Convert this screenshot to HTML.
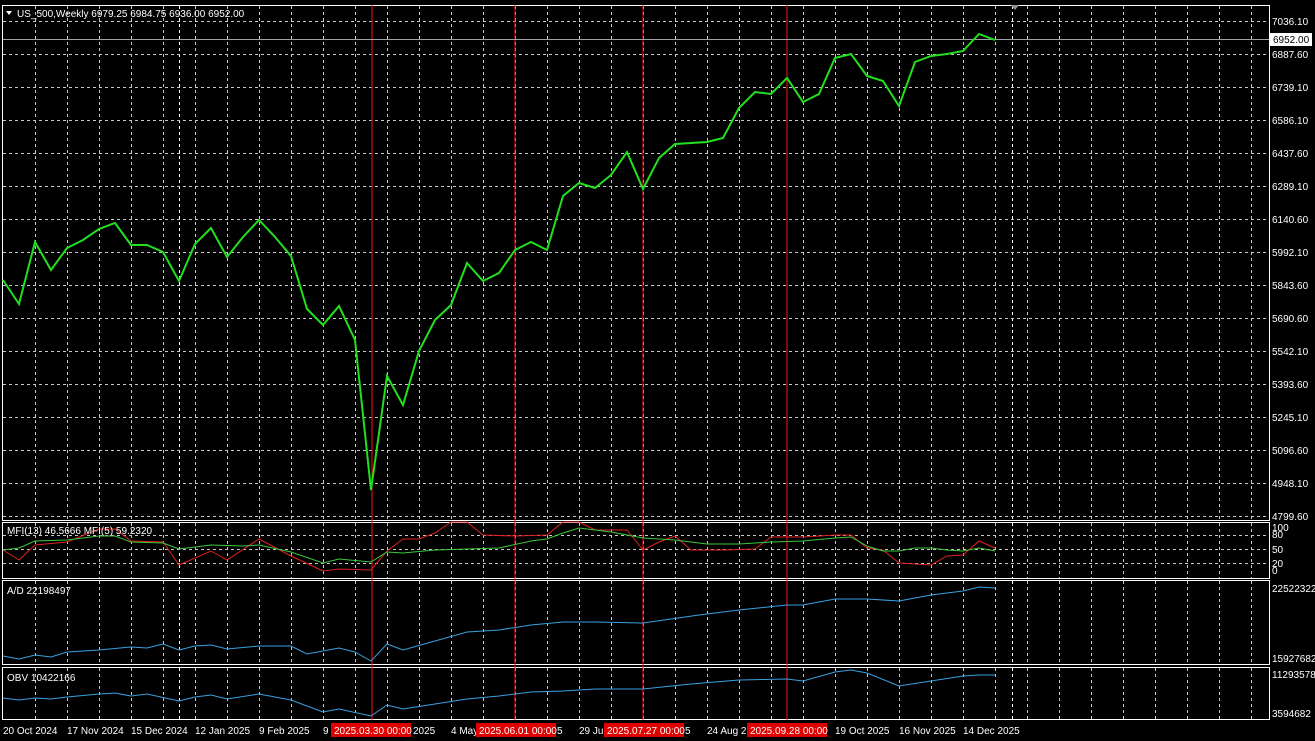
<!DOCTYPE html>
<html><head><meta charset="utf-8"><style>
html,body{margin:0;padding:0;background:#000;width:1315px;height:741px;overflow:hidden}
svg{display:block}
text{font-family:"Liberation Sans",sans-serif;font-size:10px;fill:#fff}
</style></head><body>
<svg id="s" width="1315" height="741" viewBox="0 0 1315 741" xmlns="http://www.w3.org/2000/svg">
<rect width="1315" height="741" fill="#000"/>
<g id="grid" stroke="#c8c8c8" stroke-width="1" stroke-dasharray="3,3" fill="none"></g>
<g fill="none" stroke="#fff" stroke-width="1">
<rect x="2.5" y="5.5" width="1267" height="515"/>
<rect x="2.5" y="522.5" width="1267" height="56"/>
<rect x="2.5" y="580.5" width="1267" height="84"/>
<rect x="2.5" y="667.5" width="1267" height="52"/>
</g>
<g stroke="#ff1010" stroke-width="1.3" shape-rendering="crispEdges">
<line x1="372" y1="5" x2="372" y2="720"/>
<line x1="515" y1="5" x2="515" y2="720"/>
<line x1="643" y1="5" x2="643" y2="720"/>
<line x1="787" y1="5" x2="787" y2="720"/>
</g>
<line x1="3" y1="39.5" x2="1269" y2="39.5" stroke="#a0a0a8" stroke-width="1"/>
<polygon points="1011,5 1019,5 1015,10" fill="#909090"/>
<polyline fill="none" stroke="#22e01e" stroke-width="2" points="3,280 19,304 35,242 51,270 67,248 83,240 99,229 115,223 131,245 147,245 163,252 179,281 195,244 211,228 227,257 243,237 259,220 275,237 291,256 307,309 323,325 339,306 355,340 371,490 387,376 403,405 419,351 435,320 451,305 467,263 483,281 499,273 515,250 531,242 547,250 563,196 579,183 595,188 611,175 627,152 643,189 659,158 675,144 691,143 707,142 723,138 739,108 755,92 771,94 787,78 803,102 819,94 835,58 851,54 867,76 883,81 899,106 915,62 931,56 947,54 963,51 979,34 995,40"/>
<polyline fill="none" stroke="#e02020" stroke-width="1" points="3,550 19,560 35,545 67,542 99,529 115,529 131,541 163,542 179,565 211,551 227,560 259,539 291,556 323,571 339,569 371,570 387,551 403,539 419,539 435,533 451,522 467,522 483,535 515,536 547,535 563,522 579,522 595,530 627,530 643,550 659,542 675,536 691,550 723,550 755,549 771,537 803,537 835,535 851,535 867,548 883,550 899,563 931,565 947,556 963,555 979,541 995,548"/>
<polyline fill="none" stroke="#3cc83c" stroke-width="1" points="3,550 19,548 35,541 67,540 99,536 115,536 131,542 163,543 179,549 211,545 243,546 259,545 291,552 323,563 339,559 371,562 387,552 403,553 435,550 467,549 499,548 531,541 547,539 563,533 579,528 595,530 611,532 643,538 675,540 707,544 739,544 771,542 803,541 835,538 851,537 867,546 883,551 899,551 915,548 931,548 947,550 963,551 979,548 995,551"/>
<polyline fill="none" stroke="#3aa0e0" stroke-width="1" points="3,656 19,659 35,655 51,657 67,652 99,650 131,647 147,648 163,644 179,650 195,646 211,645 227,649 259,646 291,646 307,654 339,648 355,652 371,661 387,644 403,650 435,641 467,632 499,630 531,625 563,622 595,622 643,623 699,615 739,610 787,605 803,605 835,599 867,599 899,601 931,595 963,591 979,587 995,588"/>
<polyline fill="none" stroke="#3aa0e0" stroke-width="1" points="3,698 19,700 35,698 51,699 67,697 99,694 115,693 131,696 147,694 179,701 195,697 211,695 227,699 259,694 291,700 323,712 339,709 371,716 387,705 403,709 435,704 467,699 499,696 531,692 563,691 595,689 643,689 691,684 739,680 787,679 803,681 835,672 851,670 867,673 899,686 931,681 963,676 979,675 995,675"/>
<polygon points="6,11 12,11 9,15" fill="#fff"/>
<text x="17" y="17">US_500,Weekly  6979.25 6984.75 6936.00 6952.00</text>
<text x="7" y="534">MFI(13) 46.5666  MFI(5) 59.2320</text>
<text x="7" y="594">A/D 22198497</text>
<text x="7" y="681">OBV 10422166</text>
<g id="ax"></g>
<rect x="1270" y="33" width="42" height="13" fill="#fff"/>
<text x="1273" y="43" style="fill:#000">6952.00</text>
<text x="1272" y="531">100</text><text x="1272" y="538">80</text><text x="1272" y="553">50</text><text x="1272" y="567">20</text><text x="1272" y="574">0</text>
<text x="1272" y="592">22522322</text><text x="1272" y="662">15927682</text>
<text x="1272" y="678">11293578</text><text x="1272" y="717">3594682</text>
<text x="3" y="734">20 Oct 2024</text>
<text x="67" y="734">17 Nov 2024</text>
<text x="131" y="734">15 Dec 2024</text>
<text x="195" y="734">12 Jan 2025</text>
<text x="259" y="734">9 Feb 2025</text>
<text x="323" y="734">9</text>
<rect x="331" y="723" width="80" height="14" fill="#e00000"/><text x="334" y="734">2025.03.30 00:00</text><text x="413" y="734">2025</text>
<text x="451" y="734">4 May</text>
<rect x="476" y="723" width="80" height="14" fill="#e00000"/><text x="479" y="734">2025.06.01 00:00</text><text x="557" y="734">5</text>
<text x="579" y="734">29 Jun</text>
<rect x="604" y="723" width="80" height="14" fill="#e00000"/><text x="607" y="734">2025.07.27 00:00</text><text x="685" y="734">5</text>
<text x="707" y="734">24 Aug 2</text>
<rect x="747" y="723" width="80" height="14" fill="#e00000"/><text x="750" y="734">2025.09.28 00:00</text>
<text x="835" y="734">19 Oct 2025</text>
<text x="899" y="734">16 Nov 2025</text>
<text x="963" y="734">14 Dec 2025</text>
</svg>
<script>
var g=document.getElementById('grid'),ax=document.getElementById('ax'),ns='http://www.w3.org/2000/svg';
function L(x1,y1,x2,y2,c){var l=document.createElementNS(ns,'line');l.setAttribute('x1',x1);l.setAttribute('y1',y1);l.setAttribute('x2',x2);l.setAttribute('y2',y2);if(c)l.setAttribute('stroke',c);g.appendChild(l);}
var panes=[[6,520],[523,578],[581,664],[668,719]];
for(var x=35;x<1270;x+=32){panes.forEach(function(p){L(x+.5,p[0],x+.5,p[1]);});}
[179,1012].forEach(function(x){panes.forEach(function(p){L(x+.5,p[0],x+.5,p[1],'#fff');});});
var pr=["7036.10","6887.60","6739.10","6586.10","6437.60","6289.10","6140.60","5992.10","5843.60","5690.60","5542.10","5393.60","5245.10","5096.60","4948.10","4799.60"];
for(var i=0;i<16;i++){var y=Math.round(21+i*33);L(3,y+.5,1269,y+.5);
var t=document.createElementNS(ns,'text');t.setAttribute('x',1272);t.setAttribute('y',y+4);t.textContent=pr[i];ax.appendChild(t);}
[535,549,563].forEach(function(y){L(3,y+.5,1269,y+.5);});
</script>
</body></html>
